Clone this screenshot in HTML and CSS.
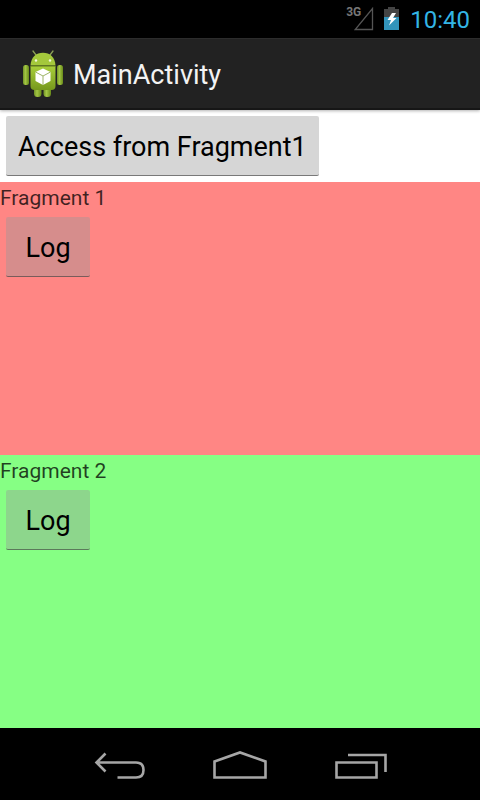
FILE: index.html
```
<!DOCTYPE html>
<html lang="en">
<head>
<meta charset="utf-8">
<meta name="viewport" content="width=device-width, initial-scale=1">
<title>MainActivity</title>
<link rel="stylesheet" href="styles.css">
</head>
<body>
<div class="screen">
  <div class="status-bar">
    <div class="signal">
      <span class="signal-type">3G</span>
      <svg width="20" height="24" viewBox="0 0 20 24" aria-hidden="true"><path d="M18.500 1.500V22.500H1.200Z" fill="none" stroke="#555" stroke-width="1.3"/></svg>
    </div>
    <svg class="battery" width="16" height="24" viewBox="0 0 16 24" aria-hidden="true">
      <path d="M4 0H11V2H15V11H0V2H4Z" fill="#444"/>
      <path d="M0 10H15V23H0Z" fill="#3294bb"/>
      <path d="M8 6H12L9 11H12.500L5 18.500L7 13H3.500Z" fill="#fff"/>
    </svg>
    <time class="clock">10:40</time>
  </div>
  <header class="action-bar">
    <svg width="42" height="48" viewBox="0 0 42 48" aria-hidden="true">
      <defs>
        <linearGradient id="green" x1="0" y1="0" x2="0" y2="1"><stop offset="0" stop-color="#a9cf3b"/><stop offset="1" stop-color="#76981c"/></linearGradient>
        <linearGradient id="limb" x1="0" y1="0" x2="1" y2="0"><stop offset="0" stop-color="#719226"/><stop offset=".4" stop-color="#a3c644"/><stop offset="1" stop-color="#688a19"/></linearGradient>
      </defs>
      <path d="M14 5L11 1M28 5L31 1" stroke="#8b9f55" stroke-width="1.300" stroke-linecap="round"/>
      <rect x="12" y="34" width="7.500" height="13" rx="3.500" fill="url(#limb)"/>
      <rect x="21.500" y="34" width="7.500" height="13" rx="3.500" fill="url(#limb)"/>
      <rect x="1" y="15" width="6" height="20" rx="2.500" fill="url(#limb)"/>
      <rect x="35" y="15" width="6" height="20" rx="2.500" fill="url(#limb)"/>
      <path d="M8.500 16H33.500V36Q33.500 40 29.500 40H12.500Q8.500 40 8.500 36Z" fill="url(#green)"/>
      <path d="M8.500 15.500C9 7 14 2.800 21 2.800S33 7 33.500 15.500Z" fill="#a4c83c"/>
      <path d="M8.500 16H33.500" stroke="#5e7b18" stroke-width="1"/>
      <circle cx="14" cy="10.500" r="1.200" fill="#f3f8df"/><circle cx="28" cy="10.500" r="1.200" fill="#f3f8df"/>
      <path d="M21 18.500L28.500 22V31L21 35L13.500 31V22Z" fill="#fff"/>
      <path d="M13.500 22L21 26L28.500 22M21 26V35" fill="none" stroke="#9eb568" stroke-width="1"/>
    </svg>
    <h1 class="title">MainActivity</h1>
  </header>
  <main class="content">
    <div class="toolbar"><button class="button" type="button">Access from Fragment1</button></div>
    <section class="fragment fragment-red">
      <h2 class="label">Fragment 1</h2>
      <button class="button" type="button">Log</button>
    </section>
    <section class="fragment fragment-green">
      <h2 class="label">Fragment 2</h2>
      <button class="button" type="button">Log</button>
    </section>
  </main>
  <nav class="nav-bar">
    <button class="nav-button" type="button" aria-label="Back">
      <svg width="54" height="30" viewBox="0 0 54 30" aria-hidden="true"><path d="M12.500 2.500L3.500 11.500L12.500 20.500M3.500 11.500H43Q50.500 11.500 50.500 19T43 26.500H24.500" fill="none" stroke="#a6a6a6" stroke-width="2.600"/></svg>
    </button>
    <button class="nav-button" type="button" aria-label="Home">
      <svg width="54" height="30" viewBox="0 0 54 30" aria-hidden="true"><path d="M1.500 10.500L27 1.500L52.500 10.500V26.500H1.500Z" fill="none" stroke="#a6a6a6" stroke-width="2.600"/></svg>
    </button>
    <button class="nav-button" type="button" aria-label="Recent apps">
      <svg width="54" height="30" viewBox="0 0 54 30" aria-hidden="true"><path d="M3.500 11.500H43.500V26.500H3.500ZM15 4H52.500V21" fill="none" stroke="#a6a6a6" stroke-width="2.600"/></svg>
    </button>
  </nav>
</div>
</body>
</html>
```
FILE: styles.css
```
* {
  box-sizing: border-box;
}

body {
  margin: 0;
  background: #fff;
  font-family: Roboto, "Open Sans", sans-serif;
}

svg {
  display: block;
  flex: none;
}

.screen {
  display: flex;
  flex-direction: column;
  min-height: 100vh;
}

.status-bar {
  display: flex;
  justify-content: flex-end;
  align-items: center;
  height: 38px;
  padding-right: 10px;
  background: #000;
}

.signal {
  display: flex;
  position: relative;
}

.signal-type {
  position: absolute;
  top: -2px;
  left: -8px;
  color: #777;
  font-size: 12px;
  line-height: 14px;
  font-weight: 700;
}

.battery {
  margin: 0 10px;
}

.clock {
  padding-top: 2px;
  color: #33b5e5;
  font-size: 24px;
  line-height: 28px;
}

.action-bar {
  display: flex;
  align-items: center;
  gap: 9px;
  height: 72px;
  padding: 0 22px;
  background: #222;
  border-top: 1px solid #2c2c2c;
  border-bottom: 2px solid #161616;
  box-shadow: 0 1px 3px rgba(0, 0, 0, 0.3);
  z-index: 1;
}

.title {
  margin: 0;
  padding-top: 2px;
  color: #f3f3f3;
  font-size: 27px;
  line-height: 32px;
  font-weight: 400;
}

.content {
  display: flex;
  flex: 1;
  flex-direction: column;
}

.toolbar {
  padding: 6px;
}

.button {
  display: block;
  min-width: 84px;
  height: 60px;
  padding: 2px 12px 0;
  background: rgba(153, 153, 153, 0.4);
  border: 0;
  border-bottom: 1px solid rgba(60, 60, 60, 0.6);
  border-radius: 2px;
  color: #000;
  font: inherit;
  font-size: 27px;
  line-height: 32px;
}

.fragment {
  flex: 1;
}

.fragment .button {
  margin: 6px;
}

.fragment-red {
  background: #ff8684;
}

.fragment-green {
  background: #86ff84;
}

.label {
  margin: 0;
  padding-top: 4px;
  color: rgba(0, 0, 0, 0.75);
  font-size: 21px;
  line-height: 25px;
  font-weight: 400;
}

.nav-bar {
  display: flex;
  justify-content: center;
  height: 72px;
  padding: 0 12.5%;
  background: #000;
}

.nav-button {
  display: flex;
  flex: 1;
  justify-content: center;
  align-items: center;
  padding: 4px 0 0;
  background: none;
  border: 0;
}
```
